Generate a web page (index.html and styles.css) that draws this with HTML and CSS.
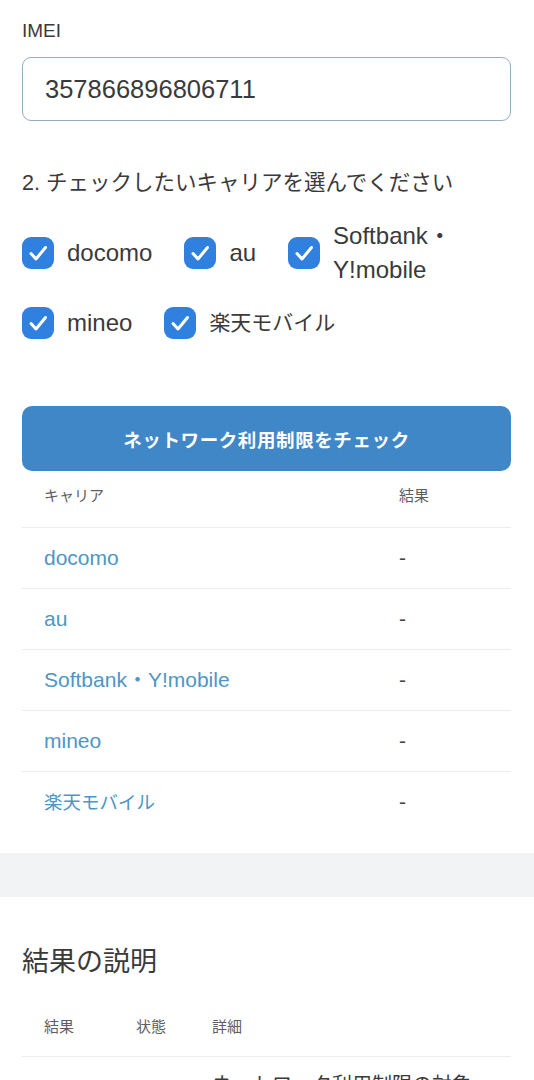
FILE: index.html
```html
<!DOCTYPE html>
<html lang="ja">
<head>
<meta charset="utf-8">
<title>ネットワーク利用制限チェック</title>
<link rel="stylesheet" href="styles.css">
</head>
<body>
<main class="page">
  <section class="checker">
    <label class="field-label" for="imei">IMEI</label>
    <input class="imei-input" id="imei" type="text" value="357866896806711">

    <h2 class="step-title">2. チェックしたいキャリアを選んでください</h2>

    <div class="carrier-choices">
      <div class="choice-row">
        <label class="choice">
          <span class="box"><svg viewBox="0 0 32 32"><path d="M9 16.5l5 5.5 9.5-11.5"/></svg></span>
          <span class="choice-text">docomo</span>
        </label>
        <label class="choice">
          <span class="box"><svg viewBox="0 0 32 32"><path d="M9 16.5l5 5.5 9.5-11.5"/></svg></span>
          <span class="choice-text">au</span>
        </label>
        <label class="choice choice--wrap">
          <span class="box"><svg viewBox="0 0 32 32"><path d="M9 16.5l5 5.5 9.5-11.5"/></svg></span>
          <span class="choice-text">Softbank・<wbr>Y!mobile</span>
        </label>
      </div>
      <div class="choice-row">
        <label class="choice">
          <span class="box"><svg viewBox="0 0 32 32"><path d="M9 16.5l5 5.5 9.5-11.5"/></svg></span>
          <span class="choice-text">mineo</span>
        </label>
        <label class="choice">
          <span class="box"><svg viewBox="0 0 32 32"><path d="M9 16.5l5 5.5 9.5-11.5"/></svg></span>
          <span class="choice-text choice-text--jp">楽天モバイル</span>
        </label>
      </div>
    </div>

    <button class="check-button" type="button">ネットワーク利用制限をチェック</button>

    <table class="result-table">
      <thead>
        <tr><th class="col-carrier">キャリア</th><th>結果</th></tr>
      </thead>
      <tbody>
        <tr><td><a class="carrier-link" href="#">docomo</a></td><td class="result">-</td></tr>
        <tr><td><a class="carrier-link" href="#">au</a></td><td class="result">-</td></tr>
        <tr><td><a class="carrier-link" href="#">Softbank・Y!mobile</a></td><td class="result">-</td></tr>
        <tr><td><a class="carrier-link" href="#">mineo</a></td><td class="result">-</td></tr>
        <tr><td><a class="carrier-link carrier-link--jp" href="#">楽天モバイル</a></td><td class="result">-</td></tr>
      </tbody>
    </table>
  </section>

  <div class="band"></div>

  <section class="legend">
    <h2 class="legend-title">結果の説明</h2>
    <table class="legend-table">
      <thead>
        <tr><th class="col-result">結果</th><th class="col-state">状態</th><th>詳細</th></tr>
      </thead>
      <tbody>
        <tr>
          <td class="mark">○</td>
          <td class="state">制限なし</td>
          <td class="detail">ネットワーク利用制限の対象ではありません。通常どおり利用できます。</td>
        </tr>
      </tbody>
    </table>
  </section>
</main>
</body>
</html>
```

FILE: styles.css
```css
* {
  box-sizing: border-box;
}

html, body {
  margin: 0;
  padding: 0;
  background: #ffffff;
}

body {
  font-family: "Liberation Sans", "Noto Sans CJK JP", sans-serif;
  color: #3a3a3a;
}

.checker {
  padding: 19px 23px 0 22px;
}

.field-label {
  display: block;
  font-size: 19px;
  line-height: 24px;
  color: #3a3a3a;
}

.imei-input {
  display: block;
  width: 100%;
  height: 64px;
  margin-top: 14px;
  padding: 0 22px;
  border: 1.5px solid #93b0c2;
  border-radius: 9px;
  background: #fff;
  font-family: "Liberation Sans", sans-serif;
  font-size: 25.5px;
  color: #3a3a3a;
  outline: none;
}

.step-title {
  margin: 47px 0 0;
  font-size: 21.5px;
  line-height: 30px;
  font-weight: normal;
  color: #3a3a3a;
}

.carrier-choices {
  margin-top: 21px;
  display: flex;
  flex-direction: column;
  gap: 19px;
}

.choice-row {
  display: flex;
  align-items: center;
}

.choice {
  display: flex;
  align-items: center;
  gap: 13px;
  margin-right: 32px;
  flex-shrink: 0;
}

.choice--wrap {
  flex-shrink: 1;
  margin-right: 0;
  min-width: 0;
}

.box {
  flex: 0 0 32px;
  width: 32px;
  height: 32px;
  border-radius: 9px;
  background: #2f80df;
  display: flex;
}

.box svg {
  width: 32px;
  height: 32px;
  fill: none;
  stroke: #ffffff;
  stroke-width: 3;
  stroke-linecap: round;
  stroke-linejoin: round;
}

.choice-text {
  font-size: 24px;
  line-height: 34px;
  color: #3a3a3a;
}

.choice-text--jp {
  font-size: 21px;
}

.check-button {
  display: block;
  width: 100%;
  height: 65px;
  margin-top: 66px;
  border: none;
  border-radius: 10px;
  background: #3f87c7;
  color: #ffffff;
  font-family: "Noto Sans CJK JP", sans-serif;
  font-size: 18.5px;
  font-weight: bold;
  letter-spacing: 0.6px;
}

.result-table {
  width: 100%;
  border-collapse: collapse;
}

.result-table th {
  text-align: left;
  font-weight: normal;
  font-size: 15px;
  line-height: 22px;
  color: #5e5e5e;
  padding: 14px 0 20px 22px;
  border-bottom: 1px solid #ececec;
}

.result-table .col-carrier {
  width: 355px;
}

.result-table td {
  height: 61px;
  padding: 0 0 0 22px;
  font-size: 21px;
  line-height: 24px;
  vertical-align: middle;
  border-bottom: 1px solid #ececec;
}

.result-table tbody tr:last-child td {
  border-bottom: none;
}

.carrier-link {
  font-size: 21px;
  color: #4d96c6;
  text-decoration: none;
}

.carrier-link--jp {
  font-size: 18.5px;
}

.result {
  color: #444;
  padding-left: 31px;
}

.band {
  height: 44px;
  margin-top: 20px;
  background: #f2f3f5;
}

.legend {
  padding: 44px 23px 0 22px;
}

.legend-title {
  margin: 0;
  font-family: "Noto Sans CJK JP", sans-serif;
  font-size: 27px;
  line-height: 38px;
  font-weight: normal;
  color: #3a3a3a;
}

.legend-table {
  width: 100%;
  margin-top: 20px;
  border-collapse: collapse;
}

.legend-table th {
  text-align: left;
  font-weight: normal;
  font-size: 15px;
  line-height: 22px;
  color: #5e5e5e;
  padding: 17px 0 18px 22px;
  border-bottom: 1px solid #ececec;
}

.legend-table .col-result {
  width: 92px;
}

.legend-table .col-state {
  width: 76px;
}

.legend-table td {
  padding: 12px 0 16px 22px;
  vertical-align: middle;
  font-size: 20px;
  line-height: 32px;
  color: #3a3a3a;
}

.legend-table .detail {
  padding-right: 20px;
}
```
